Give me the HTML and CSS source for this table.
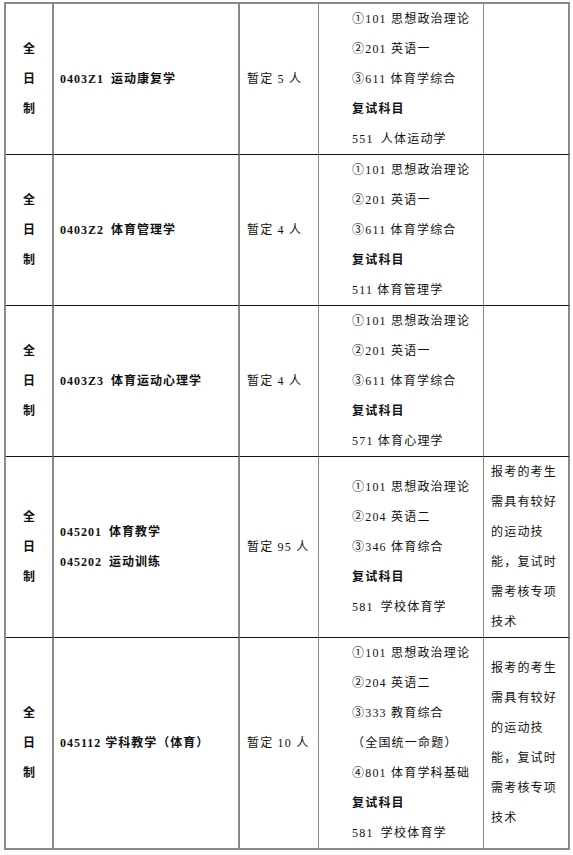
FILE: index.html
```html
<!DOCTYPE html>
<html lang="zh-CN">
<head>
<meta charset="utf-8">
<title>招生专业目录</title>
<link rel="stylesheet" href="styles.css">
</head>
<body>
<div class="grid">
  <!-- row 1 -->
  <div class="cell c1"><span>全</span><span>日</span><span>制</span></div>
  <div class="cell c2"><span>0403Z1&ensp;运动康复学</span></div>
  <div class="cell c3"><span>暂定 5 人</span></div>
  <div class="cell c4">
    <span>①101 思想政治理论</span>
    <span>②201 英语一</span>
    <span>③611 体育学综合</span>
    <span class="b">复试科目</span>
    <span>551&ensp;人体运动学</span>
  </div>
  <div class="cell c5"></div>

  <!-- row 2 -->
  <div class="cell c1"><span>全</span><span>日</span><span>制</span></div>
  <div class="cell c2"><span>0403Z2&ensp;体育管理学</span></div>
  <div class="cell c3"><span>暂定 4 人</span></div>
  <div class="cell c4">
    <span>①101 思想政治理论</span>
    <span>②201 英语一</span>
    <span>③611 体育学综合</span>
    <span class="b">复试科目</span>
    <span>511 体育管理学</span>
  </div>
  <div class="cell c5"></div>

  <!-- row 3 -->
  <div class="cell c1"><span>全</span><span>日</span><span>制</span></div>
  <div class="cell c2"><span>0403Z3&ensp;体育运动心理学</span></div>
  <div class="cell c3"><span>暂定 4 人</span></div>
  <div class="cell c4">
    <span>①101 思想政治理论</span>
    <span>②201 英语一</span>
    <span>③611 体育学综合</span>
    <span class="b">复试科目</span>
    <span>571 体育心理学</span>
  </div>
  <div class="cell c5"></div>

  <!-- row 4 -->
  <div class="cell c1"><span>全</span><span>日</span><span>制</span></div>
  <div class="cell c2"><span>045201&ensp;体育教学</span><span>045202&ensp;运动训练</span></div>
  <div class="cell c3"><span>暂定 95 人</span></div>
  <div class="cell c4">
    <span>①101 思想政治理论</span>
    <span>②204 英语二</span>
    <span>③346 体育综合</span>
    <span class="b">复试科目</span>
    <span>581&ensp;学校体育学</span>
  </div>
  <div class="cell c5"><p class="note">报考的考生需具有较好的运动技能，复试时需考核专项技术</p></div>

  <!-- row 5 -->
  <div class="cell c1 last"><span>全</span><span>日</span><span>制</span></div>
  <div class="cell c2 last"><span>045112 学科教学（体育）</span></div>
  <div class="cell c3 last"><span>暂定 10 人</span></div>
  <div class="cell c4 last">
    <span>①101 思想政治理论</span>
    <span>②204 英语二</span>
    <span>③333 教育综合</span>
    <span>（全国统一命题）</span>
    <span>④801 体育学科基础</span>
    <span class="b">复试科目</span>
    <span>581&ensp;学校体育学</span>
  </div>
  <div class="cell c5 last"><p class="note">报考的考生需具有较好的运动技能，复试时需考核专项技术</p></div>
</div>
</body>
</html>
```

FILE: styles.css
```css
html, body {
  margin: 0;
  padding: 0;
  background: #ffffff;
}

body {
  font-family: "Liberation Serif", "Noto Sans CJK SC", serif;
  font-size: 12px;
  color: #111111;
}

.grid {
  display: grid;
  grid-template-columns: 48px 186px 79px 165px 86px;
  width: 566px;
  margin: 2px 0 0 4px;
  border-top: 2px solid #8a8a8a;
  border-left: 2px solid #8a8a8a;
  box-sizing: border-box;
  width: 566px;
}

.cell {
  box-sizing: border-box;
  display: flex;
  flex-direction: column;
  justify-content: center;
  line-height: 30px;
  letter-spacing: 1.2px;
  border-bottom: 1px solid #111111;
  border-right: 2px solid #8a8a8a;
  white-space: nowrap;
}

.cell.last {
  border-bottom: 2px solid #8a8a8a;
}

.c1 {
  align-items: center;
  font-weight: bold;
  letter-spacing: 0;
}

.c2 {
  padding-left: 6px;
  font-weight: bold;
  letter-spacing: 1px;
}

.c3 {
  padding-left: 7px;
  border-right-width: 1px;
}

.c4 {
  padding-left: 33px;
  border-right-width: 1px;
}

.c5 {
  padding-left: 7px;
  white-space: normal;
}

.note {
  margin: 0;
  line-height: 30px;
}

.b {
  font-weight: bold;
}
```
